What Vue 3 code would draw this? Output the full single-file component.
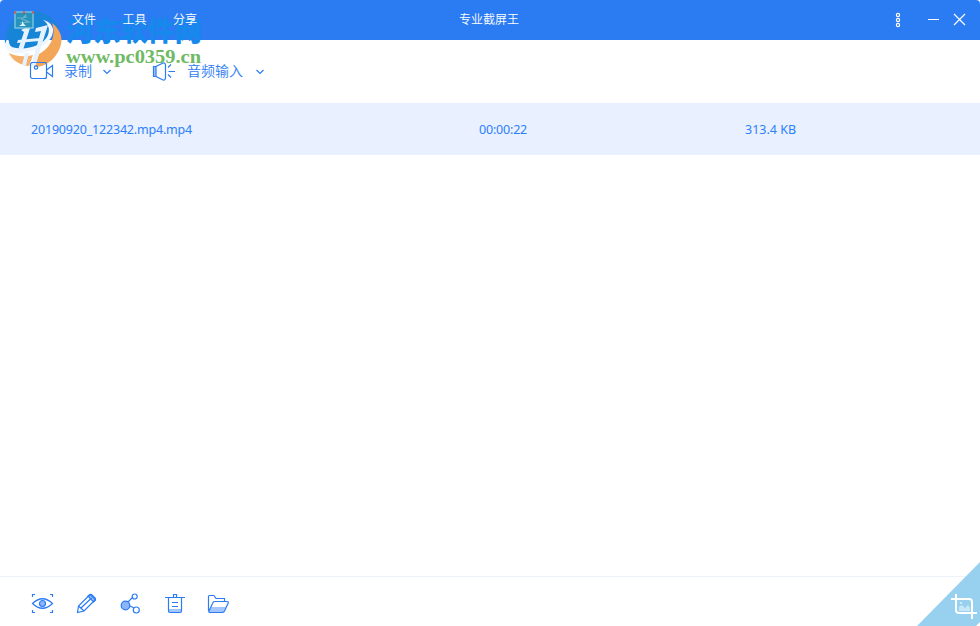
<style>
body {
  background: #fff;
  overflow: hidden;
}
</style>

<style scoped>
.window {
  position: relative;
  display: flex;
  flex-direction: column;
  box-sizing: border-box;
  width: 980px;
  height: 626px;
  overflow: hidden;
  border-radius: 4px;
  background: #fff;
  color: #2b7bf3;
  font-family: "Noto Sans", "Noto Sans CJK SC", sans-serif;
  font-size: 12px;
}
svg {
  display: block;
  fill: none;
  stroke: currentColor;
  stroke-width: 1.2;
}
.titlebar {
  display: grid;
  grid-template-columns: 1fr auto 1fr;
  align-items: center;
  height: 40px;
  background: #2b7bf3;
  color: #fff;
}
.titlebar .left {
  display: flex;
  align-items: center;
  padding-left: 14px;
}
.app-icon {
  position: relative;
  z-index: 2;
  margin-right: 38px;
}
.menu {
  display: flex;
  gap: 26.5px;
}
.menu span,
.title,
.label {
  position: relative;
  z-index: 2;
  font-family: "Noto Sans CJK SC", sans-serif;
  font-weight: 350;
  line-height: 18px;
  white-space: nowrap;
}
.menu span,
.title {
  padding-bottom: 2px;
}
.title {
  margin-left: -2px;
}
.controls {
  display: flex;
  justify-content: flex-end;
  padding-right: 14px;
}
.toolbar {
  display: flex;
  align-items: center;
  height: 63px;
  padding-left: 29px;
}
.tool {
  display: flex;
  align-items: center;
  font-size: 14px;
}
.tool svg {
  position: relative;
  z-index: 2;
}
.tool .label {
  margin: 0 11px 0 10px;
  padding-bottom: 4px;
}
.tool + .tool {
  margin-left: 41px;
}
.tool + .tool .label {
  margin: 0 13px 0 11px;
}
.row {
  display: grid;
  grid-template-columns: 448px 266px 1fr;
  align-items: center;
  height: 52px;
  padding-left: 31px;
  background: #e9f0ff;
  color: #2d80fa;
  font-size: 12.5px;
}
.file-name,
.duration {
  letter-spacing: -.19px;
}
.list {
  flex: 1;
}
.footer {
  display: flex;
  gap: 20px;
  box-sizing: border-box;
  height: 50px;
  padding: 15px 0 0 30px;
  border-top: 1px solid #edf2fa;
}
.watermark {
  position: absolute;
  left: 0;
  top: 0;
  z-index: 1;
  stroke: none;
}
.watermark .name {
  font: 900 27px "Noto Sans CJK SC", sans-serif;
}
.watermark .site {
  font: bold 18px "Liberation Serif", serif;
}
.corner {
  position: absolute;
  right: 0;
  bottom: 0;
}
</style>

<script setup>
const menus = ['文件', '工具', '分享']

const files = [
  { name: '20190920_122342.mp4.mp4', duration: '00:00:22', size: '313.4 KB' },
]
</script>

<template>
  <div class="window">
    <div class="titlebar">
      <div class="left">
        <svg class="app-icon" width="20" height="18">
          <rect x="1" y="1" width="18" height="16" fill="#2793bd" stroke="#8fcde2" />
          <path d="M3 7H7M12 4L8 8L15 11L6 12M7 7L13 6" stroke="#6db7cb" />
          <path d="M8 10L10 13L12 15H5L8 13Z" fill="#e0f3f9" stroke="none" />
          <path d="M0 1.5H2M9 1.5H11M18 1.5H20" stroke="#d7513b" stroke-width="2" />
        </svg>
        <div class="menu">
          <span v-for="menu in menus" :key="menu">{{ menu }}</span>
        </div>
      </div>
      <div class="title">专业截屏王</div>
      <div class="controls">
        <svg width="72" height="16">
          <g transform="translate(-894 -12)">
            <circle cx="898" cy="15" r="1.6" />
            <circle cx="898" cy="20" r="1.6" />
            <circle cx="898" cy="25" r="1.6" />
            <path d="M928 19.5H939M954 14L965 25M965 14L954 25" />
          </g>
        </svg>
      </div>
    </div>

    <div class="toolbar">
      <div class="tool">
        <svg width="25" height="20">
          <rect x="1.5" y=".5" width="16" height="16" rx="2" />
          <circle cx="7" cy="5.5" r="1.7" />
          <path d="M17.5 8L23.5 3.5V14.5L17.5 10" />
        </svg>
        <span class="label">录制</span>
        <svg width="8" height="6"><path d="M.5 1L4 4.500L7.500 1" /></svg>
      </div>
      <div class="tool">
        <svg width="24" height="20">
          <path d="M1.500 4.500H4V14.500H1.500Z" fill="#a5c6fc" />
          <path d="M4 4.500L11 1Q13.500 .5 13.500 3.500V15.500Q13.500 18.500 11 18L4 14.500" />
          <path d="M16 5.500L19 2.500M16.500 9.500H23M16 12.500L19 15.500" />
        </svg>
        <span class="label">音频输入</span>
        <svg width="8" height="6"><path d="M.5 1L4 4.500L7.500 1" /></svg>
      </div>
    </div>

    <div class="list">
      <div v-for="file in files" :key="file.name" class="row">
        <span class="file-name">{{ file.name }}</span>
        <span class="duration">{{ file.duration }}</span>
        <span>{{ file.size }}</span>
      </div>
    </div>

    <div class="footer">
      <svg width="24" height="24">
        <path d="M2.500 5V2.500H5M20 2.500H22.500V5M2.500 18V20.500H5M20 20.500H22.500V18" />
        <path d="M2.500 11.500Q12.500 2 22.500 11.500Q12.500 21 2.500 11.500Z" />
        <circle cx="12.500" cy="11.500" r="3" fill="#8db5fa" />
      </svg>
      <svg width="24" height="24">
        <path d="M14 4L16 2.500L21.500 8L19.500 10Z" fill="#a5c6fc" />
        <path d="M3.500 20.500L4.500 14L16 2.500Q17 2 18 3L21 6Q22 7 21 8L10 19L3.500 20.500ZM4.500 14L10 19M7 16L17.500 6" />
      </svg>
      <svg width="24" height="24">
        <path d="M10 10L15 5M12 14L16 16" />
        <circle cx="7.500" cy="13.500" r="4.300" fill="#8db5fa" />
        <circle cx="16.700" cy="4.500" r="2.500" />
        <circle cx="18.300" cy="18" r="3" />
      </svg>
      <svg width="24" height="24">
        <path d="M7 17H19V20H7Z" fill="#a5c6fc" stroke="none" />
        <path d="M3 5.500H23M6.500 5.500V19Q6.500 20.500 8 20.500H18Q19.500 20.500 19.500 19V5.500M11.500 5V2.500H14.500V5M10 10.500H16M10 14.500H16" />
      </svg>
      <svg width="24" height="24">
        <path d="M3 19L5.500 15H20L17 20H4Z" fill="#a5c6fc" stroke="none" />
        <path d="M2.500 19V4.500Q2.500 3.500 3.500 3.500H8L10 6.500H18.500V9.500M3 19L7 10.500Q7.500 9.500 9 9.500H21Q23 9.500 22 11.500L18.500 19Q18 20.500 16 20.500H4Q2.500 20.500 3 19Z" />
      </svg>
    </div>

    <svg class="watermark" width="210" height="76">
      <path d="M5 44C4 25 17 11 33 11C45 11 55 18 60 31C52 20 43 18 34 19C20 20 10 30 5 44Z" fill="#1a85d8" />
      <path d="M52 23C59 28 63 37 61 44C58 57 47 67 35 67L39 54C49 49 57 37 52 23Z" fill="#f3a558" />
      <path d="M9 53C17 57 25 57 33 55L29 66C19 65 12 60 9 53Z" fill="#f5b06b" />
      <path d="M8 43C8 30 20 18 34 18C46 18 54 25 51 34C48 45 30 52 16 50C10 49 8 47 8 43Z" fill="#1785d6" />
      <path d="M5 46Q8 54 23 53C40 50 54 41 53 29C52 24 48 21 43 20C49 24 50 30 48 35C44 45 28 50 16 48Q8 47 9 40Q5 43 5 46Z" fill="#f1f7ff" />
      <path d="M21 30L31 25L23 50H18L24 32ZM36 28L48 25L35 66H31L41 31L35 32ZM25 53H29L26 65H22ZM18 40L40 38L39 41L17 43Z" fill="#e5f2ff" />
      <text class="name" x="66" y="41" textLength="136" lengthAdjust="spacingAndGlyphs" fill="#1689ec">河东软件网</text>
      <text class="site" x="66" y="63" textLength="135" lengthAdjust="spacingAndGlyphs" fill="#6fba62">www.pc0359.cn</text>
    </svg>

    <svg class="corner" width="64" height="64">
      <path d="M64 0V60L60 64H1Z" fill="#98d1ef" stroke="none" />
      <path d="M35 37H53Q56 37 56 40V56M40 32V48Q40 51 43 51H61M56 52V57" stroke="#fff" stroke-width="2" />
      <path d="M43 49V45L46 43L49 46L52 43L54 46V49Z" fill="#c9e8f7" stroke="none" />
      <circle cx="45" cy="41" r="1" fill="#e4f4fb" stroke="none" />
    </svg>
  </div>
</template>
